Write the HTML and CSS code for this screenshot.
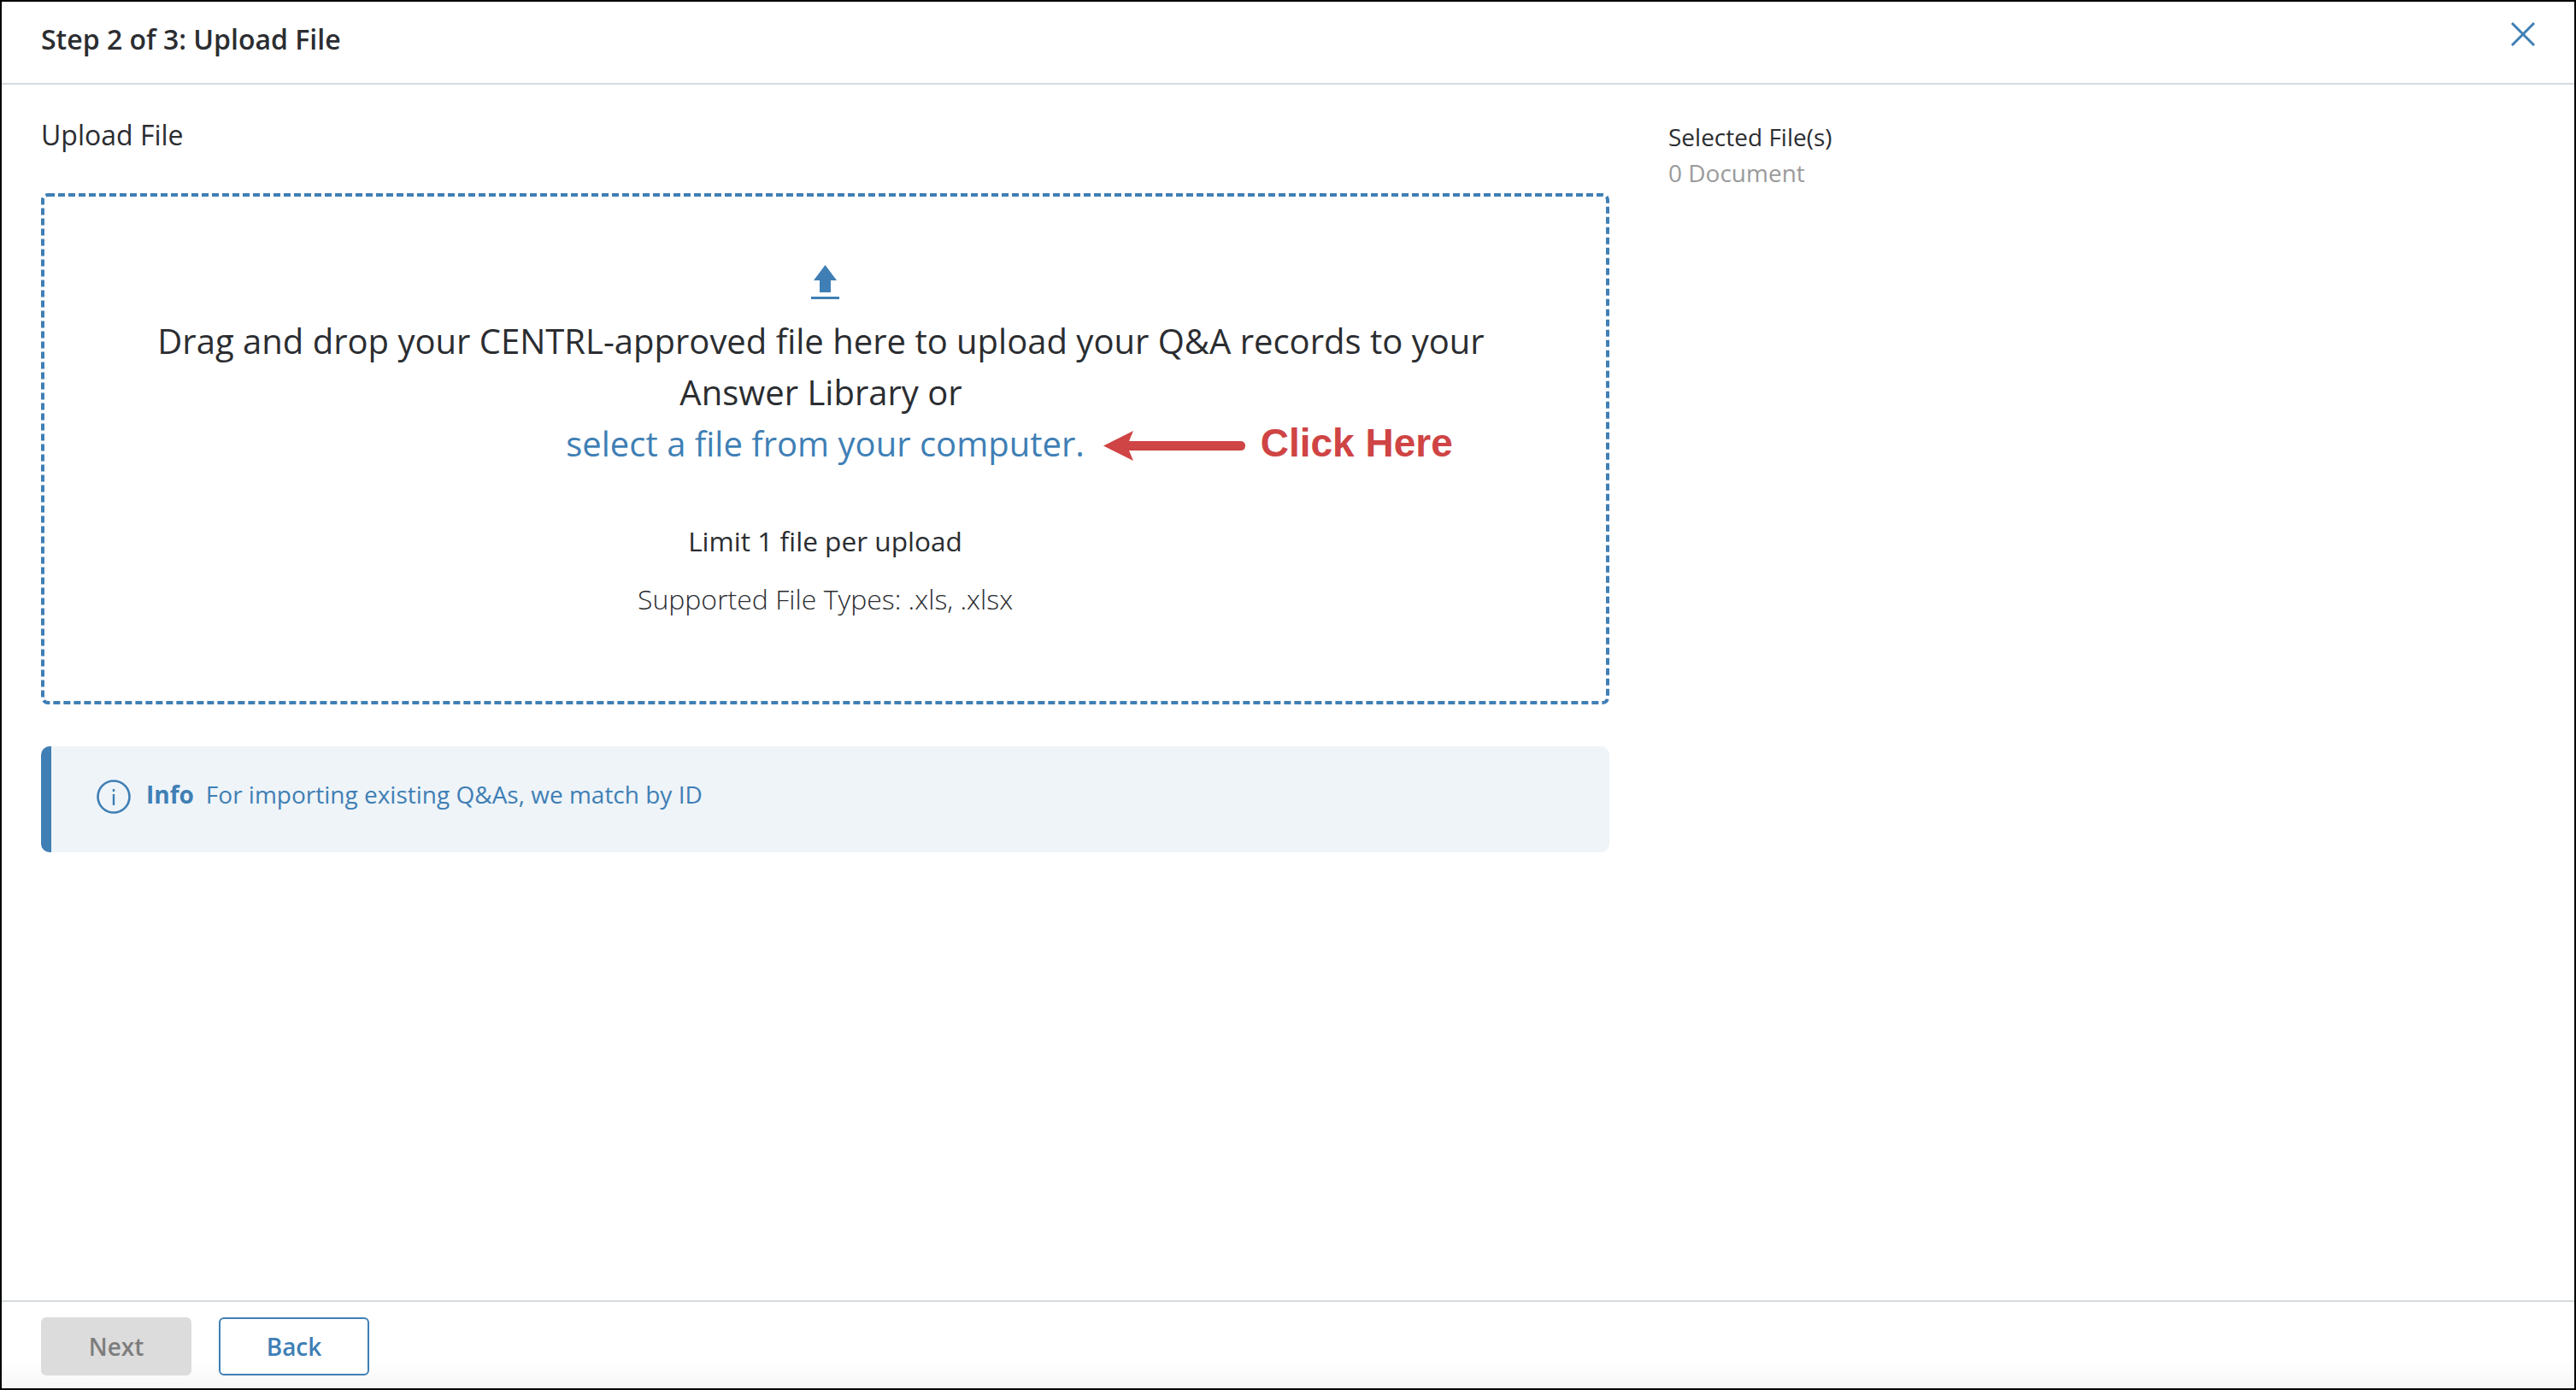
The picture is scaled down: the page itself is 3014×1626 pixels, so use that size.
FILE: index.html
```html
<!DOCTYPE html>
<html lang="en">
<head>
  <meta charset="UTF-8" />
  <title>Step 2 of 3: Upload File</title>
  <link rel="stylesheet" href="styles.css">
</head>
<body>
  <div class="wizard">
    <header class="wizard-header">
      <h1>Step 2 of 3: Upload File</h1>
      <button class="close-btn" aria-label="Close">
        <svg width="28" height="28" viewBox="0 0 28 28"><path d="M1 1 L27 27 M27 1 L1 27" stroke="#3f7fb5" stroke-width="3" fill="none"/></svg>
      </button>
    </header>

    <main class="wizard-body">
      <section class="upload-col">
        <h2>Upload File</h2>

        <div class="dropzone">
          <svg class="dropzone-border" width="1835" height="598" viewBox="0 0 1835 598"><rect x="2" y="2" width="1831" height="594" rx="6" fill="none" stroke="#3f7fb5" stroke-width="4" stroke-dasharray="8 4"/></svg>
          <svg class="upload-icon" width="33" height="40" viewBox="0 0 33 40"><path d="M16.5 0 L30 18 L23 18 L23 32 L10 32 L10 18 L3 18 Z" fill="#3f7fb5"/><rect x="0" y="37" width="33" height="3" fill="#3f7fb5"/></svg>
          <p class="drop-text drop-intro">Drag and drop your CENTRL-approved file here to upload your Q&amp;A records to your Answer Library or</p>
          <p class="drop-text">
            <span class="file-link">select a file from your computer.
              <span class="callout">
                <svg width="166" height="35" viewBox="0 0 166 35"><path d="M0 17.5 L35 0 L30 12 L160 12 Q166 12 166 17.5 Q166 23 160 23 L30 23 L35 35 Z" fill="#cf4444"/></svg>
                <b>Click Here</b>
              </span>
            </span>
          </p>
          <p class="limit">Limit 1 file per upload</p>
          <p class="types">Supported File Types: .xls, .xlsx</p>
        </div>

        <div class="info-box">
          <svg width="40" height="40" viewBox="0 0 40 40"><circle cx="20" cy="20" r="18.5" fill="none" stroke="#3f7fb5" stroke-width="2.6"/><rect x="18.8" y="17" width="2.4" height="13" fill="#3f7fb5"/><rect x="18.8" y="11" width="2.4" height="3" fill="#3f7fb5"/></svg>
          <strong>Info</strong>
          <span>For importing existing Q&amp;As, we match by ID</span>
        </div>
      </section>

      <aside class="selected-col">
        <div class="selected-title">Selected File(s)</div>
        <div class="selected-count">0 Document</div>
      </aside>
    </main>

    <footer class="wizard-footer">
      <button class="btn btn-disabled">Next</button>
      <button class="btn btn-outline">Back</button>
    </footer>
  </div>
</body>
</html>
```

FILE: styles.css
```css
:root {
  --blue: #3f7fb5;
  --text: #2b2d31;
  --line: #d5dade;
}

* {
  box-sizing: border-box;
  margin: 0;
  padding: 0;
}

body {
  font-family: 'Open Sans', sans-serif;
  color: var(--text);
  background: #fff;
}

.wizard {
  width: 3014px;
  height: 1626px;
  border: 2px solid #000;
  display: flex;
  flex-direction: column;
}

.wizard-header {
  height: 97px;
  flex: none;
  border-bottom: 2px solid var(--line);
  display: flex;
  justify-content: space-between;
  align-items: center;
  padding: 0 46px 8px;
}

.wizard-header h1 {
  font-size: 32px;
  font-weight: 600;
}

.close-btn {
  background: none;
  border: none;
  margin: -11px 0 0 0;
  line-height: 0;
}

.wizard-body {
  flex: 1;
  display: flex;
  padding: 0 46px;
}

.upload-col {
  width: 1835px;
  flex: none;
}

.upload-col h2 {
  font-size: 32px;
  font-weight: 400;
  line-height: 44px;
  margin-top: 37px;
  margin-bottom: 46px;
}

.dropzone {
  position: relative;
  height: 598px;
  display: flex;
  flex-direction: column;
  align-items: center;
  text-align: center;
  padding-top: 84px;
}

.dropzone-border {
  position: absolute;
  top: 0;
  left: 0;
}

.upload-icon {
  margin-bottom: 19px;
}

.drop-text {
  font-size: 40px;
  line-height: 60px;
  width: 1640px;
}

.drop-intro {
  padding-right: 10px;
}

.file-link {
  color: var(--blue);
  position: relative;
}

.callout {
  position: absolute;
  left: 100%;
  top: 0;
  margin-left: 22px;
  display: flex;
  align-items: center;
  gap: 18px;
  white-space: nowrap;
  height: 60px;
}

.callout b {
  font-family: 'Liberation Sans', Arial, sans-serif;
  font-size: 46px;
  color: #cf4444;
  margin-top: -7px;
}

.limit {
  font-size: 31.6px;
  line-height: 44px;
  margin-top: 62px;
}

.types {
  font-size: 32px;
  font-weight: 300;
  line-height: 44px;
  margin-top: 24px;
}

.info-box {
  margin-top: 49px;
  height: 124px;
  background: #eff4f8;
  border-left: 12px solid var(--blue);
  border-radius: 10px;
  display: flex;
  align-items: flex-start;
  padding: 39px 0 0 53px;
  color: var(--blue);
  font-size: 28px;
  line-height: 34px;
}

.info-box strong {
  font-weight: 700;
  margin-left: 18px;
  margin-right: 14px;
}

.selected-col {
  margin-left: 69px;
  padding-top: 40px;
  font-size: 28px;
  line-height: 42px;
}

.selected-count {
  color: #9a9a9a;
}

.wizard-footer {
  height: 103px;
  flex: none;
  border-top: 2px solid var(--line);
  display: flex;
  gap: 32px;
  padding: 18px 46px 0;
  background: linear-gradient(to bottom, #fff 70%, #f6f6f6);
}

.btn {
  width: 176px;
  height: 68px;
  border-radius: 6px;
  font-family: inherit;
  font-size: 28px;
  font-weight: 600;
}

.btn-disabled {
  background: #dcdcdc;
  border: none;
  color: #7d7d7d;
}

.btn-outline {
  background: #fff;
  border: 2px solid var(--blue);
  color: var(--blue);
}
```
